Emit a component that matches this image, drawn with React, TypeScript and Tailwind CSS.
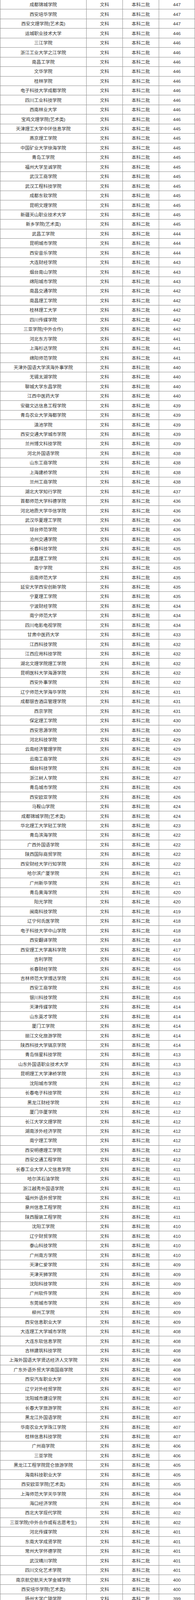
const rows: [string, number][] = [
  ['成都锦城学院', 447],
  ['西安培华学院', 447],
  ['西安文理学院(艺术类)', 447],
  ['运城职业技术大学', 446],
  ['三江学院', 446],
  ['浙江工业大学之江学院', 446],
  ['南昌工学院', 446],
  ['文华学院', 446],
  ['桂林学院', 446],
  ['电子科技大学成都学院', 446],
  ['四川工业科技学院', 446],
  ['西南林业大学', 446],
  ['宝鸡文理学院(艺术类)', 446],
  ['天津理工大学中环信息学院', 445],
  ['燕京理工学院', 445],
  ['中国矿业大学徐海学院', 445],
  ['青岛工学院', 445],
  ['福州大学至诚学院', 445],
  ['武汉工商学院', 445],
  ['武汉工程科技学院', 445],
  ['成都东软学院', 445],
  ['昆明文理学院', 445],
  ['新疆天山职业技术大学', 445],
  ['新乡学院(艺术类)', 445],
  ['武昌工学院', 444],
  ['昆明城市学院', 444],
  ['西安音乐学院', 444],
  ['大连财经学院', 443],
  ['烟台南山学院', 443],
  ['绵阳城市学院', 443],
  ['南昌交通学院', 442],
  ['南昌理工学院', 442],
  ['桂林理工大学', 442],
  ['四川传媒学院', 442],
  ['三亚学院(中外合作)', 442],
  ['河北东方学院', 441],
  ['上海杉达学院', 441],
  ['绵阳师范学院', 441],
  ['天津外国语大学滨海外事学院', 440],
  ['无锡太湖学院', 440],
  ['聊城大学东昌学院', 440],
  ['江西中医药大学', 440],
  ['安徽文达信息工程学院', 439],
  ['青岛农业大学海都学院', 439],
  ['滇池学院', 439],
  ['西安交通大学城市学院', 439],
  ['兰州博文科技学院', 439],
  ['河北外国语学院', 438],
  ['山东工商学院', 438],
  ['上海建桥学院', 438],
  ['兰州工商学院', 438],
  ['湖北大学知行学院', 437],
  ['首都师范大学科德学院', 436],
  ['河北地质大学华信学院', 436],
  ['武汉华夏理工学院', 436],
  ['琼台师范学院', 436],
  ['沧州交通学院', 435],
  ['长春科技学院', 435],
  ['武昌理工学院', 435],
  ['南宁学院', 435],
  ['云南师范大学', 435],
  ['延安大学西安创新学院', 435],
  ['宁夏理工学院', 435],
  ['宁波财经学院', 434],
  ['南宁师范大学', 434],
  ['四川电影电视学院', 434],
  ['甘肃中医药大学', 433],
  ['江西科技学院', 432],
  ['江西应用科技学院', 432],
  ['湖北文理学院理工学院', 432],
  ['昆明医科大学海源学院', 432],
  ['西安外事学院', 432],
  ['辽宁师范大学海华学院', 431],
  ['成都银杏酒店管理学院', 431],
  ['西京学院', 431],
  ['保定理工学院', 430],
  ['西安思源学院', 430],
  ['河北科技学院', 429],
  ['云南经济管理学院', 429],
  ['云南工商学院', 429],
  ['烟台科技学院', 428],
  ['浙江树人学院', 427],
  ['青岛城市学院', 426],
  ['西安欧亚学院', 426],
  ['马鞍山学院', 424],
  ['成都锦城学院(艺术类)', 424],
  ['华北理工大学轻工学院', 423],
  ['青岛滨海学院', 422],
  ['广西外国语学院', 422],
  ['陕西国际商贸学院', 422],
  ['西安财经大学行知学院', 422],
  ['哈尔滨广厦学院', 421],
  ['广州新华学院', 421],
  ['青岛黄海学院', 420],
  ['阳光学院', 420],
  ['闽南科技学院', 419],
  ['辽宁何氏医学院', 418],
  ['电子科技大学中山学院', 418],
  ['西安翻译学院', 418],
  ['西安理工大学高科学院', 417],
  ['吉利学院', 416],
  ['长春财经学院', 416],
  ['吉林师范大学博达学院', 416],
  ['西安工商学院', 416],
  ['银川科技学院', 416],
  ['天津传媒学院', 414],
  ['山东英才学院', 414],
  ['厦门工学院', 414],
  ['丽江文化旅游学院', 414],
  ['陕西科技大学镐京学院', 414],
  ['青岛恒星科技学院', 413],
  ['山东外国语职业技术大学', 413],
  ['昆明理工大学津桥学院', 413],
  ['沈阳城市学院', 412],
  ['长春电子科技学院', 412],
  ['黑龙江财经学院', 412],
  ['厦门华厦学院', 412],
  ['长江大学文理学院', 412],
  ['湖南涉外经济学院', 412],
  ['南宁理工学院', 412],
  ['西安明德理工学院', 412],
  ['西安交通工程学院', 412],
  ['长春工业大学人文信息学院', 411],
  ['哈尔滨石油学院', 411],
  ['浙江越秀外国语学院', 411],
  ['福州外语外贸学院', 411],
  ['泉州信息工程学院', 411],
  ['陕西服装工程学院', 411],
  ['沈阳工学院', 410],
  ['辽宁财贸学院', 410],
  ['泰山科技学院', 410],
  ['广州南方学院', 410],
  ['天津仁爱学院', 409],
  ['天津天狮学院', 409],
  ['沈阳科技学院', 409],
  ['广州软件学院', 409],
  ['东莞城市学院', 409],
  ['柳州工学院', 409],
  ['西安信息职业大学', 409],
  ['大连理工大学城市学院', 408],
  ['大连东软信息学院', 408],
  ['吉林建筑科技学院', 408],
  ['上海外国语大学贤达经济人文学院', 408],
  ['广东外语外贸大学南国商学院', 408],
  ['西安汽车职业大学', 408],
  ['辽宁对外经贸学院', 407],
  ['沈阳城市建设学院', 407],
  ['长春大学旅游学院', 407],
  ['黑龙江外国语学院', 407],
  ['华南农业大学珠江学院', 407],
  ['桂林信息科技学院', 407],
  ['广州商学院', 406],
  ['三亚学院', 406],
  ['黑龙江工程学院昆仑旅游学院', 405],
  ['海南科技职业大学', 405],
  ['西安欧亚学院(艺术类)', 405],
  ['上海师范大学天华学院', 404],
  ['海口经济学院', 404],
  ['西北大学现代学院', 402],
  ['三亚学院(中外合作或有志愿考生)', 402],
  ['河北传媒学院', 401],
  ['东南大学成贤学院', 401],
  ['常州大学怀德学院', 401],
  ['武汉晴川学院', 401],
  ['四川文化艺术学院', 401],
  ['南京航空航天大学金城学院', 400],
  ['西安培华学院(艺术类)', 400],
  ['扬州大学广陵学院', 399],
  ['南昌理工学院(艺术类)', 398],
  ['上海中侨职业技术大学', 397],
  ['西安科技大学高新学院', 397],
  ['宁夏大学新华学院', 397],
  ['海口经济学院(艺术类)', 397],
  ['天津商业大学宝德学院(艺术类)', 397],
]

export default function App() {
  return (
    <div className="w-[500px] bg-white border-l border-r border-[#8c8c8c] text-[11.7px] text-[#333] font-['Liberation_Sans','Noto_Sans_CJK_SC',sans-serif]">
      {rows.map(([name, score], i) => (
        <div
          key={i}
          className="grid grid-cols-[221px_93px_93px_1fr] h-[24.45px] border-b border-[#8c8c8c] leading-none"
        >
          <div className="flex items-center justify-center border-r border-[#8c8c8c] whitespace-nowrap pt-px">{name}</div>
          <div className="flex items-center justify-center border-r border-[#8c8c8c] pt-px">文科</div>
          <div className="flex items-center justify-center border-r border-[#8c8c8c] pt-px">本科二批</div>
          <div className="flex items-center justify-center pt-px">{score}</div>
        </div>
      ))}
    </div>
  )
}
